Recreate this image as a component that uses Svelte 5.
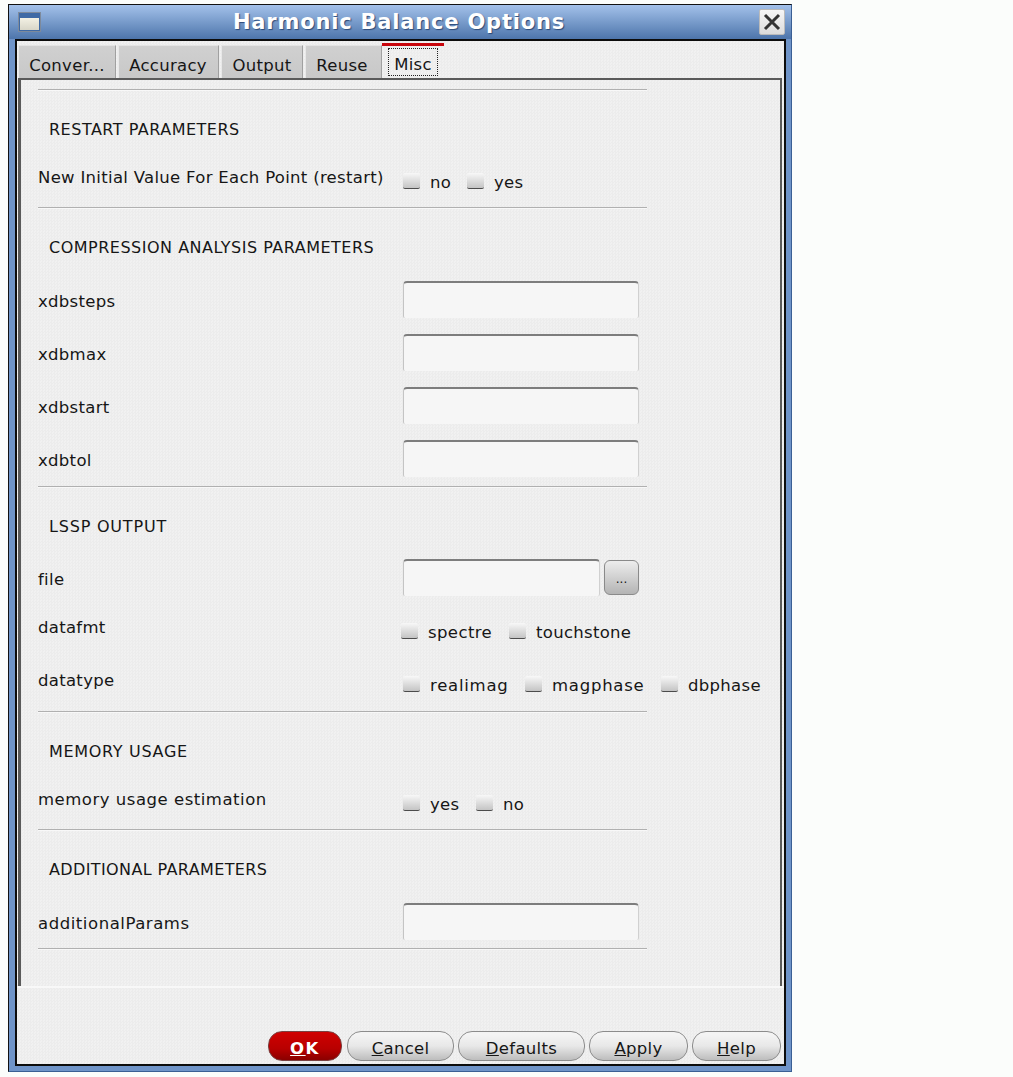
<script>
  const tabs = [
    { label: 'Conver...', cls: 't1' },
    { label: 'Accuracy', cls: 't2' },
    { label: 'Output', cls: 't3' },
    { label: 'Reuse', cls: 't4' }
  ];
  const xdb = ['xdbsteps', 'xdbmax', 'xdbstart', 'xdbtol'];
  const buttons = [
    { pre: 'C', rest: 'ancel', cls: 'b-cancel' },
    { pre: 'D', rest: 'efaults', cls: 'b-defaults' },
    { pre: 'A', rest: 'pply', cls: 'b-apply' },
    { pre: 'H', rest: 'elp', cls: 'b-help' }
  ];
</script>

<div class="window">
  <div class="titlebar">
    <div class="menu-icon"><span></span></div>
    <div class="title">Harmonic Balance Options</div>
    <div class="close">
      <svg width="20" height="20" viewBox="0 0 20 20"><path d="M3 3 L17 17 M17 3 L3 17" stroke="#333" stroke-width="3" fill="none"/></svg>
    </div>
  </div>
  <div class="client">
    <div class="tabs">
      {#each tabs as t}
        <div class="tab {t.cls}">{t.label}</div>
      {/each}
      <div class="tab active"><span class="focus">Misc</span></div>
    </div>
    <div class="panel">
      <div class="sep"></div>
      <div class="heading">RESTART PARAMETERS</div>
      <div class="row opt-row r-restart">
        <div class="label">New Initial Value For Each Point (restart)</div>
        <div class="opts">
          <span class="cb"></span><span class="ot o-no">no</span>
          <span class="cb"></span><span class="ot">yes</span>
        </div>
      </div>

      <div class="sep"></div>
      <div class="heading">COMPRESSION ANALYSIS PARAMETERS</div>
      <div class="fields">
        {#each xdb as name}
          <div class="row field">
            <div class="label">{name}</div>
            <div class="input"></div>
          </div>
        {/each}
      </div>

      <div class="sep"></div>
      <div class="heading h-lssp">LSSP OUTPUT</div>
      <div class="fields lssp">
        <div class="row field">
          <div class="label tight">file</div>
          <div class="input short"></div>
          <div class="browse">...</div>
        </div>
      </div>
      <div class="row opt-row r-fmt">
        <div class="label">datafmt</div>
        <div class="opts left">
          <span class="cb"></span><span class="ot o-spectre">spectre</span>
          <span class="cb"></span><span class="ot">touchstone</span>
        </div>
      </div>
      <div class="row opt-row r-type">
        <div class="label">datatype</div>
        <div class="opts">
          <span class="cb"></span><span class="ot o-real">realimag</span>
          <span class="cb"></span><span class="ot o-mag">magphase</span>
          <span class="cb"></span><span class="ot">dbphase</span>
        </div>
      </div>

      <div class="sep"></div>
      <div class="heading h-mem">MEMORY USAGE</div>
      <div class="row opt-row r-mem">
        <div class="label">memory usage estimation</div>
        <div class="opts">
          <span class="cb"></span><span class="ot o-yes">yes</span>
          <span class="cb"></span><span class="ot">no</span>
        </div>
      </div>

      <div class="sep"></div>
      <div class="heading h-add">ADDITIONAL PARAMETERS</div>
      <div class="fields last">
        <div class="row field">
          <div class="label l-add">additionalParams</div>
          <div class="input"></div>
        </div>
      </div>
      <div class="sep"></div>
    </div>
    <div class="footer">
      <div class="btn ok"><u>O</u>K</div>
      {#each buttons as b}
        <div class="btn {b.cls}"><u>{b.pre}</u>{b.rest}</div>
      {/each}
    </div>
  </div>
</div>

<style>
  :global(body) {
    background: #fbfdfb;
  }
  .window {
    box-sizing: border-box;
    width: 784px;
    height: 1068px;
    margin: 4px 0 0 8px;
    border: 1.5px solid #111;
    border-right-color: #3a5f94;
    border-bottom-color: #3a5f94;
    background: #6f94c8;
    padding: 0 5px 5px 6px;
    display: flex;
    flex-direction: column;
    color: #161616;
    font-family: "DejaVu Sans", sans-serif;
    font-size: 16.5px;
    letter-spacing: 0.3px;
  }
  .titlebar {
    height: 34px;
    flex: none;
    margin: 0 -5px 0 -6px;
    padding: 0 6px 0 9px;
    background: linear-gradient(#a3c1ea, #4d75ab);
    display: flex;
    align-items: center;
    position: relative;
  }
  .menu-icon {
    width: 23px;
    height: 20px;
    box-sizing: border-box;
    background: #3f6aa5;
    padding: 5px 1px 1px;
    border: 1px solid #7d8a9c;
  }
  .menu-icon span {
    display: block;
    height: 100%;
    background: linear-gradient(#f3f1e4, #d8d6c8);
  }
  .title {
    flex: 1;
    text-align: center;
    font-weight: 700;
    font-size: 21px;
    letter-spacing: 0.8px;
    color: #fff;
    text-shadow: 1px 1px 1px #2c4a78;
    padding-right: 2px;
  }
  .close {
    width: 26px;
    height: 26px;
    box-sizing: border-box;
    background: linear-gradient(#f6f6f6, #dcdcdc);
    border: 1px solid #bbb;
    border-radius: 2px;
    display: flex;
    align-items: center;
    justify-content: center;
  }
  .client {
    flex: 1;
    min-height: 0;
    border: 2px solid #0c0c0c;
    background: repeating-conic-gradient(#ececec 0 25%, #f1f1f1 0 50%) 0 0 / 3px 3px;
    display: flex;
    flex-direction: column;
  }
  .tabs {
    height: 37px;
    flex: none;
    display: flex;
    align-items: flex-end;
    padding-left: 1px;
    box-sizing: border-box;
  }
  .tab {
    box-sizing: border-box;
    height: 33px;
    background: linear-gradient(#d0d0d0, #c8c8c8);
    border-top: 1px solid #e4e4e4;
    border-left: 1px solid #e8e8e8;
    border-right: 1px solid #a0a0a0;
    margin-right: 2px;
    display: flex;
    align-items: center;
    justify-content: center;
    padding-top: 7px;
  }
  .t1 { width: 98px; }
  .t2 { width: 101px; padding-right: 1px; }
  .t3 { width: 82px; }
  .t4 { width: 77px; margin-right: 0; padding-right: 3px; }
  .tab.active {
    width: 62px;
    height: 35px;
    margin: 0;
    background: transparent;
    border: none;
    border-top: 3px solid #c8050c;
    padding: 2px 6px 0;
    align-items: stretch;
  }
  .focus {
    flex: 1;
    border: 1px dotted #222;
    text-align: center;
    line-height: 32px;
    margin-bottom: 2px;
    overflow: hidden;
  }
  .panel {
    flex: none;
    height: 908px;
    box-sizing: border-box;
    margin-left: 1px;
    margin-right: 2px;
    border-top: 2px solid #5a5a5a;
    border-left: 3px solid #5a5a5a;
    border-right: 2px solid #5a5a5a;
    padding: 9px 0 0 17px;
    position: relative;
  }
  .sep {
    width: 609px;
    height: 2px;
    background: linear-gradient(#b0b0b0 50%, #f8f8f8 50%);
  }
  .heading {
    height: 40px;
    margin-top: 18px;
    padding-left: 11px;
    line-height: 42px;
    font-size: 16px;
    letter-spacing: 0.5px;
  }
  .h-lssp { letter-spacing: 0.8px; }
  .h-mem { letter-spacing: 0.68px; }
  .h-add { letter-spacing: 0.38px; }
  .row {
    display: flex;
  }
  .label {
    width: 365px;
    flex: none;
    white-space: nowrap;
  }
  .opt-row .label {
    position: relative;
    top: 1px;
  }
  .r-restart { height: 58px; padding-top: 18px; box-sizing: border-box; }
  .r-fmt { height: 53px; margin-top: 21px; box-sizing: border-box; }
  .r-type { height: 41px; box-sizing: border-box; }
  .r-mem { height: 58px; padding-top: 18px; box-sizing: border-box; }
  .r-mem .label { letter-spacing: 0.52px; }
  .l-add { letter-spacing: 0.55px; }
  .opts {
    display: flex;
    align-items: center;
    height: 22px;
    margin-top: 4px;
  }
  .opts.left { margin-left: -2px; }
  .cb {
    width: 17px;
    height: 16px;
    box-sizing: border-box;
    border-radius: 2px;
    background: linear-gradient(#f8f8f8, #c4c4c4);
    border-bottom: 1.5px solid #4c4c4c;
    flex: none;
    margin-top: -2px;
  }
  .ot {
    margin-left: 10px;
    white-space: nowrap;
    box-sizing: border-box;
  }
  .o-no { width: 37px; }
  .o-spectre { width: 81px; letter-spacing: 0.4px; }
  .o-real { width: 95px; }
  .o-mag { width: 109px; }
  .o-yes { width: 46px; }
  .o-real, .o-mag { letter-spacing: 0.75px; }
  .fields {
    display: flex;
    flex-direction: column;
    gap: 16px;
    padding-top: 14px;
    margin-bottom: 9px;
  }
  .fields.lssp { padding-top: 13px; margin-bottom: 0; }
  .fields.last { margin-bottom: 8px; }
  .field {
    height: 37px;
    align-items: center;
  }
  .field .label {
    position: relative;
    top: 2px;
  }
  .input {
    width: 236px;
    height: 37px;
    box-sizing: border-box;
    background: #f6f6f6;
    border-top: 2px solid #7d7d7d;
    border-left: 1px solid #c4c4c4;
    border-right: 1px solid #d0d0d0;
    border-radius: 4px 4px 2px 2px;
  }
  .input.short { width: 197px; }
  .browse {
    width: 35px;
    height: 35px;
    margin-left: 4px;
    box-sizing: border-box;
    border: 1px solid #8a8a8a;
    border-radius: 6px;
    background: linear-gradient(#ededed, #b4b4b4);
    text-align: center;
    font-size: 12px;
    letter-spacing: 0;
    line-height: 36px;
  }
  .footer {
    flex: 1;
    border-top: 2px solid #f8f8f8;
    display: flex;
    justify-content: flex-end;
    align-items: flex-end;
    gap: 4px;
    padding: 0 3px 3px 0;
  }
  .btn {
    height: 30px;
    box-sizing: border-box;
    border: 1px solid #8c8c8c;
    border-radius: 14px;
    background: linear-gradient(#f4f4f4 10%, #e8e8e8 50%, #bdbdbd);
    text-align: center;
    line-height: 33px;
    flex: none;
  }
  .ok {
    width: 74px;
    margin-right: 1px;
    color: #fff;
    font-weight: 700;
    letter-spacing: 1.5px;
    background: linear-gradient(#d00000, #b80000 60%, #8a0000);
    border-color: #7a4040;
  }
  .b-cancel { width: 107px; }
  .b-defaults { width: 127px; }
  .b-apply { width: 99px; }
  .b-help { width: 89px; }
</style>
